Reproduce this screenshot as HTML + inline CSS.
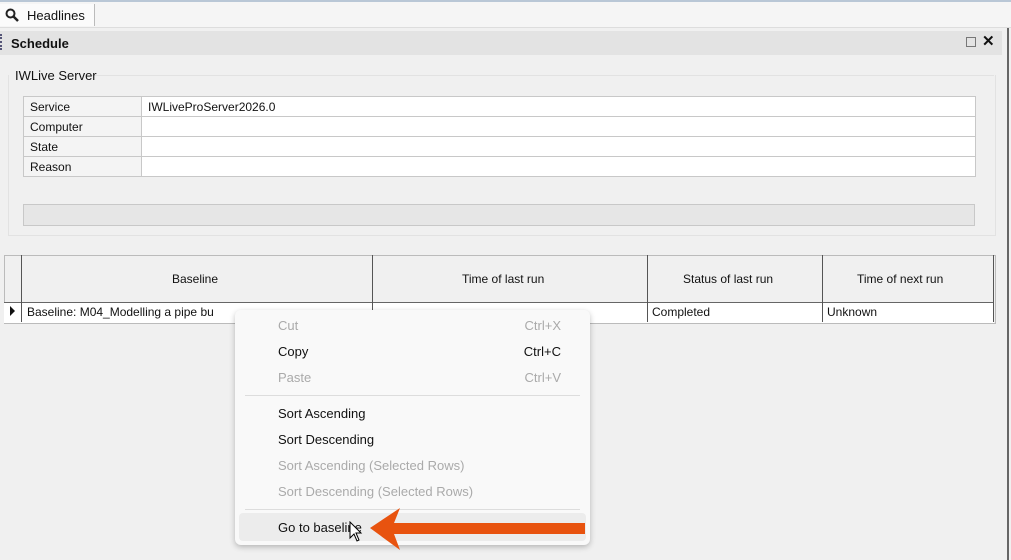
<!DOCTYPE html><html><head><style>
body{margin:0;width:1011px;height:560px;background:#f0f0f0;font-family:"Liberation Sans",sans-serif;font-size:12px;color:#111;position:relative;overflow:hidden}
.a{position:absolute}
.grid td{border:1px solid #c8c8c8;height:19px;padding:0 0 0 6px;background:#fff}
.grid td:first-child{background:#f4f4f4;width:111px}
.mi{position:absolute;left:43px;font-size:13px}
.sc{position:absolute;right:29px;font-size:13px}
.dis{color:#aaa}
</style></head><body>
<div class="a" style="left:0;top:0;width:1011px;height:2px;background:#b9c7d6"></div>
<div class="a" style="left:0;top:2px;width:1011px;height:25px;background:#f5f5f5;border-bottom:1px solid #ddd"></div>
<div class="a" style="left:0;top:4px;width:94px;height:22px;background:#fbfbfb;border-right:1px solid #bbb"></div>
<svg class="a" style="left:5px;top:8px" width="14" height="14"><circle cx="5.5" cy="5.5" r="4" fill="none" stroke="#222" stroke-width="2"/><path d="M8.5 8.5 L13 13" stroke="#222" stroke-width="2.5"/></svg>
<div class="a" style="left:27px;top:8px;font-size:13px">Headlines</div>
<div class="a" style="left:0;top:31px;width:1002px;height:24px;background:#e3e3e3"></div>
<div class="a" style="left:0;top:34px;width:2px;height:16px;border-left:2px dotted #557"></div>
<div class="a" style="left:11px;top:36px;font-weight:bold;font-size:13px">Schedule</div>
<div class="a" style="left:966px;top:37px;width:8px;height:8px;border:1px solid #777"></div>
<div class="a" style="left:982px;top:32px;font-weight:bold;font-size:15px">✕</div>
<div class="a" style="left:1007px;top:28px;width:2px;height:532px;background:#666"></div>
<div class="a" style="left:8px;top:75px;width:986px;height:160px;border:1px solid #e2e2e2;border-top:none"></div>
<div class="a" style="left:90px;top:75px;width:904px;height:1px;background:#e2e2e2"></div>
<div class="a" style="left:15px;top:68px;font-size:13px">IWLive Server</div>
<table class="grid a" style="left:23px;top:96px;width:953px;border-collapse:collapse;font-size:12px">
<tr><td>Service</td><td>IWLiveProServer2026.0</td></tr>
<tr><td>Computer</td><td></td></tr>
<tr><td>State</td><td></td></tr>
<tr><td>Reason</td><td></td></tr></table>
<div class="a" style="left:23px;top:204px;width:950px;height:20px;background:#e6e6e6;border:1px solid #c8c8c8"></div>
<div class="a" style="left:4px;top:255px;width:990px;height:67px;border:1px solid #bbb;background:#f0f0f0"></div>
<div class="a" style="left:4px;top:302px;width:990px;height:20px;background:#fff;border-top:1px solid #666;border-bottom:1px solid #bbb"></div>
<div class="a" style="left:21px;top:255px;width:1px;height:67px;background:#555"></div>
<div class="a" style="left:372px;top:255px;width:1px;height:67px;background:#555"></div>
<div class="a" style="left:647px;top:255px;width:1px;height:67px;background:#555"></div>
<div class="a" style="left:822px;top:255px;width:1px;height:67px;background:#555"></div>
<div class="a" style="left:993px;top:255px;width:1px;height:67px;background:#555"></div>
<div class="a" style="left:172px;top:272px">Baseline</div>
<div class="a" style="left:462px;top:272px">Time of last run</div>
<div class="a" style="left:683px;top:272px">Status of last run</div>
<div class="a" style="left:857px;top:272px">Time of next run</div>
<div class="a" style="left:10px;top:306px;width:0;height:0;border-left:5px solid #111;border-top:5px solid transparent;border-bottom:5px solid transparent"></div>
<div class="a" style="left:27px;top:305px">Baseline: M04_Modelling a pipe bu</div>
<div class="a" style="left:652px;top:305px">Completed</div>
<div class="a" style="left:827px;top:305px">Unknown</div>
<div class="a" style="left:235px;top:310px;width:355px;height:235px;background:#f9f9f9;border-radius:6px;box-shadow:0 2px 6px rgba(0,0,0,.25)">
<div class="mi dis" style="top:8px">Cut</div><div class="sc dis" style="top:8px">Ctrl+X</div>
<div class="mi" style="top:34px">Copy</div><div class="sc" style="top:34px">Ctrl+C</div>
<div class="mi dis" style="top:60px">Paste</div><div class="sc dis" style="top:60px">Ctrl+V</div>
<div class="a" style="left:10px;top:85px;width:335px;height:1px;background:#ddd"></div>
<div class="mi" style="top:96px">Sort Ascending</div>
<div class="mi" style="top:122px">Sort Descending</div>
<div class="mi dis" style="top:148px">Sort Ascending (Selected Rows)</div>
<div class="mi dis" style="top:174px">Sort Descending (Selected Rows)</div>
<div class="a" style="left:10px;top:199px;width:335px;height:1px;background:#ddd"></div>
<div class="a" style="left:4px;top:203px;width:347px;height:28px;background:#ececec;border-radius:4px"></div>
<div class="mi" style="top:210px">Go to baseline</div>
</div>
<svg class="a" style="left:368px;top:506px" width="220" height="46"><path d="M2 22 L32 2 L26 17 L217 17 L217 28 L26 28 L32 44 Z" fill="#e8530f"/></svg>
<svg class="a" style="left:349px;top:521px" width="14" height="22"><path d="M1 1 L1 17 L5 13 L8 20 L10 19 L7 12 L12 12 Z" fill="#fff" stroke="#000"/></svg>
</body></html>
